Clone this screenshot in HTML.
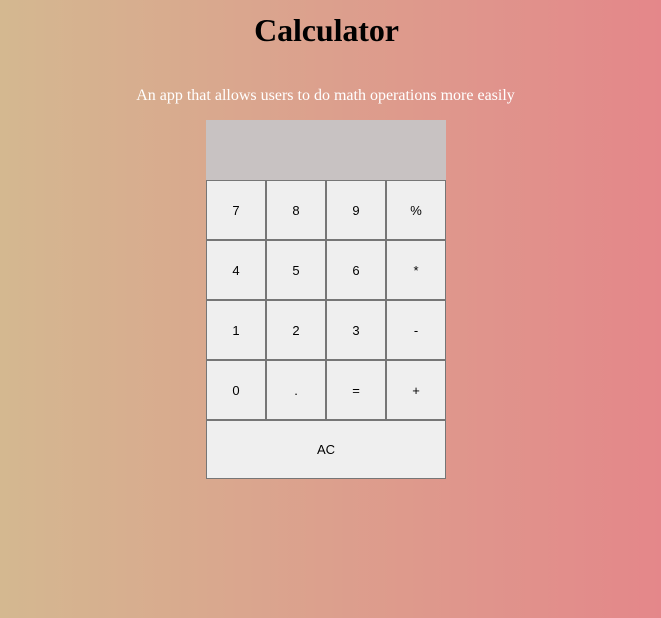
<!DOCTYPE html>
<html><head><style>
html,body{margin:0;padding:0}
body{width:661px;height:618px;background:linear-gradient(to right,#d4b890,#e4878a);font-family:"Liberation Serif",serif;position:relative;overflow:hidden}
h1{position:absolute;top:10px;left:-4px;width:661px;margin:0;text-align:center;font-size:32px;line-height:40px;font-weight:bold;color:#000;letter-spacing:-0.1px}
p{position:absolute;top:86px;left:-5px;width:661px;margin:0;text-align:center;font-size:16px;line-height:20px;color:#fff}
.calc{position:absolute;left:206px;top:120px;width:240px}
.disp{height:60px;background:#c8c2c2}
.b{float:left;box-sizing:border-box;width:60px;height:60px;border:1px solid #767676;background:#efefef;font-family:"Liberation Sans",sans-serif;font-size:13px;color:#000;display:flex;align-items:center;justify-content:center}
.ac{width:240px;height:59px}
</style></head><body>
<h1>Calculator</h1>
<p>An app that allows users to do math operations more easily</p>
<div class="calc">
<div class="disp"></div>
<div class="b">7</div><div class="b">8</div><div class="b">9</div><div class="b">%</div>
<div class="b">4</div><div class="b">5</div><div class="b">6</div><div class="b">*</div>
<div class="b">1</div><div class="b">2</div><div class="b">3</div><div class="b">-</div>
<div class="b">0</div><div class="b">.</div><div class="b">=</div><div class="b">+</div>
<div class="b ac">AC</div>
</div>
</body></html>
